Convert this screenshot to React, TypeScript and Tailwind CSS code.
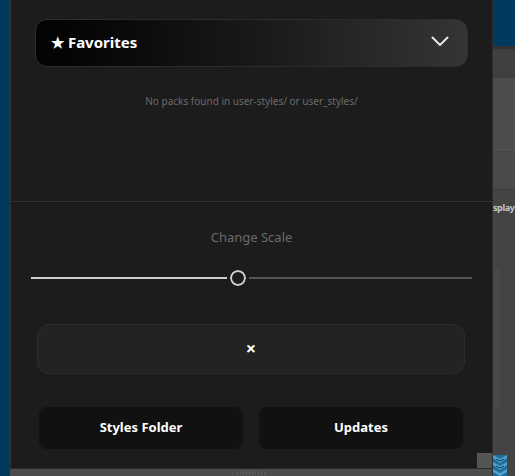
import React, { useState } from "react";

const font = { fontFamily: '"Noto Sans", "Open Sans", Arial, sans-serif' };

function Chevron() {
  return (
    <svg width="18" height="11" viewBox="0 0 18 11" fill="none">
      <path d="M1.5 1.5 L9 9 L16.5 1.5" stroke="#e6e6e6" strokeWidth="2" strokeLinecap="round" strokeLinejoin="round" />
    </svg>
  );
}

function ScaleSlider({ value }: { value: number }) {
  return (
    <div className="relative h-[16px] w-full">
      <div className="absolute left-0 right-0 top-[7px] h-[2px] bg-[#555555]" />
      <div className="absolute left-0 top-[7px] h-[2px] bg-[#cfcfcf]" style={{ width: `${value}%` }} />
      <div
        className="absolute top-0 h-[16px] w-[16px] -translate-x-1/2 rounded-full border-2 border-[#cfcfcf] bg-[#1c1c1c] outline outline-3 outline-[#1c1c1c]"
        style={{ left: `${value}%` }}
      />
    </div>
  );
}

function Tile() {
  return (
    <svg width="14" height="21" viewBox="0 0 14 21">
      <rect width="14" height="21" fill="#1f6f9a" />
      <path d="M0 0 L7 4 L14 0 L14 3 L7 8 L0 3 Z" fill="#4fa3d1" />
      <path d="M0 7 L7 11 L14 7 L14 10 L7 15 L0 10 Z" fill="#4fa3d1" />
      <path d="M0 14 L7 18 L14 14 L14 17 L7 21 L0 17 Z" fill="#4fa3d1" />
      <path d="M3 4 L7 6 L11 4" stroke="#0d3f5e" strokeWidth="1" fill="none" />
      <path d="M3 11 L7 13 L11 11" stroke="#0d3f5e" strokeWidth="1" fill="none" />
    </svg>
  );
}

export default function App() {
  const [scale] = useState(47);

  return (
    <div className="flex h-[476px] w-[515px] overflow-hidden bg-[#444444]" style={font}>
      {/* backdrop edge */}
      <div className="w-[10px] shrink-0 bg-[#003a5c]" />

      {/* style panel */}
      <div className="flex w-[482px] shrink-0 flex-col">
        <div className="relative flex flex-1 flex-col border-l border-[#333333] bg-[#1c1c1c]">
          <div className="pl-[24px] pr-[24px] pt-[19px]">
            <button className="flex h-[48px] w-full items-center justify-between rounded-[12px] border border-[#2c2c2c] bg-gradient-to-r from-[#030303] to-[#353535] pb-[3px] pl-[15px] pr-[18px]">
              <span className="text-[15px] font-bold leading-[20px] text-white">★ Favorites</span>
              <Chevron />
            </button>
          </div>
          <p className="mt-[27px] text-center text-[10px] text-[#6b6b6b]">No packs found in user-styles/ or user_styles/</p>

          <div className="mt-[92px] h-px w-full bg-[#333333]" />

          <p className="mt-[26px] text-center text-[13px] text-[#6a6a6a]">Change Scale</p>

          <div className="mt-[22px] pl-[20px] pr-[20px]">
            <ScaleSlider value={scale} />
          </div>

          <div className="mt-[38px] pl-[26px] pr-[27px]">
            <button className="flex h-[50px] w-full items-center justify-center rounded-[12px] border border-[#2d2d2d] bg-[#232323] text-[18px] font-bold text-white">
              ×
            </button>
          </div>

          <div className="mt-[33px] grid grid-cols-2 gap-[16px] pl-[28px] pr-[29px]">
            <button className="h-[42px] rounded-[8px] bg-[#111111] text-[13px] font-bold text-white">Styles Folder</button>
            <button className="h-[42px] rounded-[8px] bg-[#111111] text-[13px] font-bold text-white">Updates</button>
          </div>

          <div className="absolute bottom-0 right-0 h-[15px] w-[15px] bg-[#555555]" />
        </div>
        {/* resize grip bar */}
        <div className="flex h-[8px] items-center justify-center border-t border-[#2a2a2a] bg-[#4d4d4d]">
          <div className="flex gap-[2px]">
            {Array.from({ length: 10 }).map((_, i) => (
              <div key={i} className="h-[4px] w-px bg-[#5e5e5e]" />
            ))}
          </div>
        </div>
      </div>

      {/* neighbouring window */}
      <div className="flex w-[23px] shrink-0 flex-col border-l border-[#2e2e2e]">
        <div className="h-[46px] bg-[#003a5c]" />
        <div className="h-[3px] bg-[#333333]" />
        <div className="h-[29px] bg-[#404040]" />
        <div className="h-[72px] border-b border-[#555555] bg-[#4c4c4c]" />
        <div className="h-[40px] border-b border-[#3a3a3a] bg-[#4a4a4a]" />
        <div className="flex flex-1 flex-col bg-[#444444]">
          <div className="mt-[3px] whitespace-nowrap">
            <span className="text-[9px] font-bold leading-[14px] tracking-[-0.4px] text-[#c8c8c8]">splay</span>
          </div>
          <div className="ml-[1px] mt-[52px] h-[140px] w-[6px] rounded-[3px] bg-[#4a4a4a]" />
          <div className="mt-auto flex">
            <Tile />
          </div>
        </div>
      </div>
    </div>
  );
}
